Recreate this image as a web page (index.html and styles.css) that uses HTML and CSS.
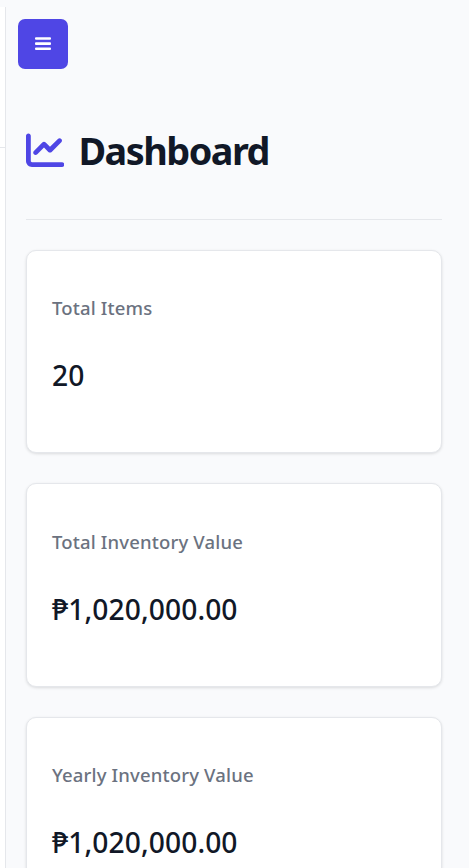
FILE: index.html
```
<!DOCTYPE html>
<html lang="en">
<head>
<meta charset="utf-8">
<meta name="viewport" content="width=device-width, initial-scale=1">
<title>Dashboard</title>
<link rel="stylesheet" href="styles.css">
</head>
<body>
<div class="layout">
  <aside class="sidebar"><div class="sidebar-header"></div></aside>
  <main class="content">
    <button class="menu-toggle" aria-label="Menu">
      <svg class="menu-icon" viewBox="0 0 16 14" fill="currentColor"><rect y="0.200" width="16" height="2.600" rx="1"/><rect y="5.300" width="16" height="2.600" rx="1"/><rect y="10.400" width="16" height="2.600" rx="1"/></svg>
    </button>
    <header class="page-header">
      <svg class="chart-icon" viewBox="0 0 512 512" fill="currentColor"><path d="M64 64c0-17.700-14.300-32-32-32S0 46.300 0 64V400c0 44.200 35.800 80 80 80H480c17.700 0 32-14.300 32-32s-14.300-32-32-32H80c-8.800 0-16-7.200-16-16V64zm406.600 86.600c12.500-12.500 12.500-32.800 0-45.300s-32.800-12.500-45.300 0L320 210.700l-57.400-57.400c-12.500-12.500-32.800-12.500-45.300 0l-112 112c-12.500 12.500-12.500 32.800 0 45.300s32.800 12.500 45.300 0L240 221.300l57.400 57.400c12.500 12.500 32.800 12.500 45.300 0l128-128z"/></svg>
      <h1 class="title">Dashboard</h1>
    </header>
    <section class="cards">
      <article class="card">
        <h2 class="label">Total Items</h2>
        <p class="value">20</p>
      </article>
      <article class="card">
        <h2 class="label">Total Inventory Value</h2>
        <p class="value">₱1,020,000.00</p>
      </article>
      <article class="card">
        <h2 class="label">Yearly Inventory Value</h2>
        <p class="value">₱1,020,000.00</p>
      </article>
    </section>
  </main>
</div>
</body>
</html>
```
FILE: styles.css
```
* { box-sizing: border-box; }
body {
  margin: 0;
  height: 868px;
  overflow: hidden;
  background: #f9fafc;
  color: #111827;
  font-family: "Segoe UI", "Noto Sans", "Open Sans", sans-serif;
}
.layout { display: flex; height: 868px; overflow: hidden; }
.sidebar {
  flex: 0 0 6px;
  margin-top: 7px;
  background: #fff;
  border-right: 1px solid #e5e7eb;
}
.sidebar-header { height: 141px; border-bottom: 1px solid #e5e7eb; }
.content { flex: 1; padding: 19px 27px 0 20px; }
.menu-toggle {
  display: flex;
  align-items: center;
  justify-content: center;
  width: 50px;
  height: 50px;
  margin: 0 0 0 -8px;
  padding: 0;
  border: 0;
  border-radius: 7px;
  background: #4f46e5;
  color: #fff;
}
.menu-icon { width: 16px; height: 14px; }
.page-header {
  display: flex;
  align-items: center;
  gap: 14px;
  height: 151px;
  padding-top: 13px;
  border-bottom: 1px solid #e5e7eb;
}
.chart-icon { width: 38.400px; height: 38.400px; color: #4f46e5; }
.title {
  margin: 0;
  font-size: 37.800px;
  font-weight: 700;
  line-height: 48px;
  letter-spacing: -1.500px;
}
.cards { display: grid; gap: 30px; padding-top: 30px; }
.card {
  height: 203.400px;
  padding: 43.200px 25px 0;
  background: #fff;
  border: 1px solid #e5e7eb;
  border-radius: 10px;
  box-shadow: 0 1px 3px rgba(0, 0, 0, 0.12);
}
.label {
  margin: 0;
  color: #6b7280;
  font-size: 18.500px;
  font-weight: 500;
  line-height: 28px;
  letter-spacing: 0.160px;
  white-space: nowrap;
}
.value {
  margin: 32px 0 0;
  font-size: 28.200px;
  font-weight: 550;
  line-height: 42px;
  letter-spacing: 0.100px;
  white-space: nowrap;
}
```
